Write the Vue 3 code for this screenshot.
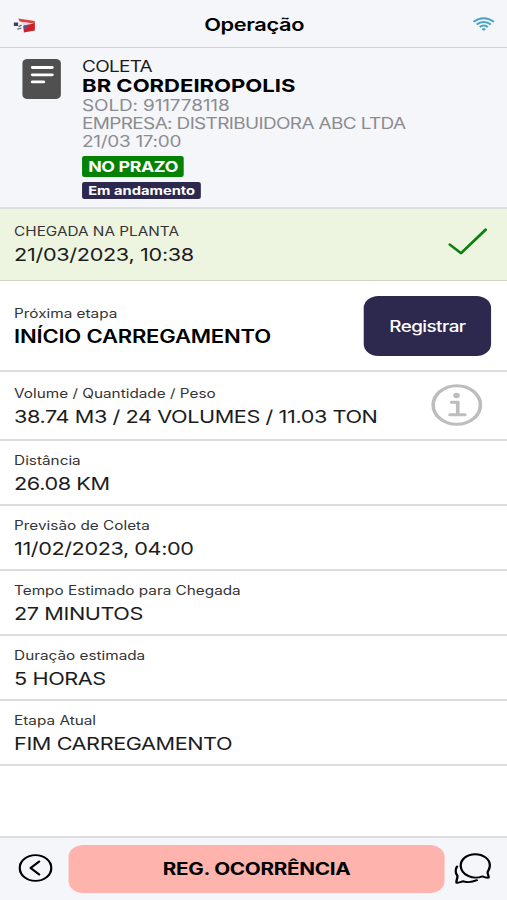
<script setup>
import { reactive } from "vue";

const coleta = reactive({
  tipo: "COLETA",
  local: "BR CORDEIROPOLIS",
  sold: "911778118",
  empresa: "DISTRIBUIDORA ABC LTDA",
  data: "21/03 17:00",
  prazo: "NO PRAZO",
  status: "Em andamento",
});

const detalhes = [
  { id: "distancia", titulo: "Distância", valor: "26.08 KM" },
  { id: "previsao", titulo: "Previsão de Coleta", valor: "11/02/2023, 04:00" },
  { id: "tempo", titulo: "Tempo Estimado para Chegada", valor: "27 MINUTOS" },
  { id: "duracao", titulo: "Duração estimada", valor: "5 HORAS" },
  { id: "etapa", titulo: "Etapa Atual", valor: "FIM CARREGAMENTO" },
];
</script>

<template>
  <div class="tela">
    <header class="topo">
      <svg class="logo" width="18" height="16" viewBox="0 0 18 16">
        <path d="M4 .6 17.3 2.9 17.5 6 12 5 5 3.6Z" fill="#e0413f" />
        <path d="M6 3.8 17 5.6 8.5 7.3Z" fill="#e9d5dc" />
        <path d="M8 8 17.5 5V12.4L8.5 14.6Z" fill="#cf2128" />
        <path d="M8.2 7.6 13 6.4 11.5 9.5 8.5 11Z" fill="#5c5793" />
        <path d="M.2 4.4h3.6v3.6H.2z" fill="#3d3f5a" />
        <path d="M4.2 8.8 6.6 7M3.2 11.2 6.4 10.2" stroke="#676b88" stroke-width="1.3" />
      </svg>
      <h1>Operação</h1>
      <svg class="wifi" width="18" height="14" viewBox="0 0 18 14" fill="none" stroke="#4aa3c7" stroke-width="1.8">
        <path d="M.6 4.9Q9-2.4 17.4 4.9" />
        <path d="M3.2 7.5Q9 2.5 14.8 7.5" />
        <path d="M5.7 10Q9 7 12.3 10" />
        <circle cx="9" cy="12.3" r="1.3" fill="#4aa3c7" stroke="none" />
      </svg>
    </header>

    <section class="coleta">
      <svg class="documento" width="32" height="41" viewBox="0 0 32 41">
        <rect x=".3" y="1" width="31.4" height="40" rx="4" fill="#505051" />
        <path d="M8.5 9.5h16M8.5 16.8h16M8.5 23.9h9" stroke="#fff" stroke-width="2.8" stroke-linecap="round" />
      </svg>
      <div class="coleta-texto">
        <p class="tipo">{{ coleta.tipo }}</p>
        <p class="local">{{ coleta.local }}</p>
        <p class="info sold">SOLD: {{ coleta.sold }}</p>
        <p class="info empresa">EMPRESA: {{ coleta.empresa }}</p>
        <p class="info">{{ coleta.data }}</p>
        <div class="prazo">{{ coleta.prazo }}</div>
        <div class="status">{{ coleta.status }}</div>
      </div>
    </section>

    <main>
      <section class="linha chegada">
        <div>
          <p class="titulo">CHEGADA NA PLANTA</p>
          <p class="valor">21/03/2023, 10:38</p>
        </div>
        <svg class="check" width="32" height="28" viewBox="0 0 32 28">
          <path d="M1.2 16.5 10.4 25.2 30.6 1.6" fill="none" stroke="#0b800b" stroke-width="2.4" stroke-linecap="round" stroke-linejoin="round" />
        </svg>
      </section>

      <section class="linha proxima">
        <div>
          <p class="titulo">Próxima etapa</p>
          <p class="valor">INÍCIO CARREGAMENTO</p>
        </div>
        <button class="registrar">Registrar</button>
      </section>

      <section class="linha volume">
        <div>
          <p class="titulo">Volume / Quantidade / Peso</p>
          <p class="valor">38.74 M3 / 24 VOLUMES / 11.03 TON</p>
        </div>
        <svg class="info-icone" width="42" height="42" viewBox="0 0 42 42" fill="none" stroke="#bdbdbd">
          <circle cx="21" cy="21" r="19.3" stroke-width="3" />
          <circle cx="20.8" cy="11.5" r="2.7" fill="#bdbdbd" stroke="none" />
          <path d="M16.8 18.2h5v12.4M15.5 30.8h12" stroke-width="3" stroke-linecap="round" stroke-linejoin="round" />
        </svg>
      </section>

      <section v-for="item in detalhes" :key="item.id" class="linha detalhe">
        <div>
          <p class="titulo">{{ item.titulo }}</p>
          <p class="valor">{{ item.valor }}</p>
        </div>
      </section>
    </main>

    <footer class="rodape">
      <svg class="voltar" width="28" height="28" viewBox="0 0 28 28" fill="none" stroke="#000" stroke-width="1.9" stroke-linecap="round" stroke-linejoin="round">
        <circle cx="14" cy="14" r="12.9" />
        <path d="M17 7.5 10 14 17 20.5" />
      </svg>
      <button class="ocorrencia">REG. OCORRÊNCIA</button>
      <svg class="chat" width="30" height="31" viewBox="0 0 30 31" fill="none" stroke="#000" stroke-width="1.9" stroke-linecap="round" stroke-linejoin="round">
        <path d="M28 24.6C26.3 25 24.6 24.3 23 23.4C15 27 5.6 22 5.2 13C5 6 10.5 1.2 17 1.2C23.5 1.2 29 6 29 12.5C29 15.2 28.2 17 27.2 19.2C26.9 21 28.3 23 28 24.6Z" />
        <path d="M2.2 13.5C.4 17 .8 20 2.5 22.8C2.8 25 1.2 28 1.8 29.7C3.5 30 5.5 28.5 7.5 28.3C11 29.7 15 29 18.4 27.2" />
      </svg>
    </footer>
  </div>
</template>

<style>
body {
  margin: 0;
  overflow: hidden;
}
</style>

<style scoped>
* {
  box-sizing: border-box;
}

.tela {
  width: 414px;
  height: 900px;
  display: flex;
  flex-direction: column;
  transform: scaleX(1.22464);
  transform-origin: 0 0;
  background: #fff;
  color: #1c1c1e;
  font-family: Inter, "Liberation Sans", sans-serif;
}

p,
h1 {
  margin: 0;
  white-space: nowrap;
}

button {
  border: 0;
  padding: 0;
  font-family: inherit;
}

.topo {
  height: 48px;
  flex: none;
  display: flex;
  align-items: center;
  justify-content: space-between;
  padding: 0 10px 0 11px;
  background: #f4f6fa;
  border-bottom: 1px solid #d0d2d6;
}

.topo h1 {
  font-size: 17.8px;
  line-height: 24px;
  letter-spacing: -0.3px;
  font-weight: 600;
  color: #000;
  padding-top: 2px;
}

.logo {
  margin-top: 5px;
}

.wifi {
  margin-top: 1px;
}

.coleta {
  height: 161px;
  flex: none;
  display: flex;
  padding: 10px 0 0 18px;
  background: #f4f6fa;
  border-bottom: 2px solid #dcdfdd;
}

.coleta-texto {
  display: flex;
  flex-direction: column;
  align-items: flex-start;
  margin-left: 17px;
}

.tipo {
  font-size: 15.5px;
  line-height: 18px;
  letter-spacing: -0.6px;
}

.local {
  font-size: 18px;
  line-height: 19px;
  font-weight: 700;
  color: #000;
}

.info {
  font-size: 15.5px;
  line-height: 18px;
  letter-spacing: -0.25px;
  color: #8c8c8f;
}

.sold {
  padding-top: 2px;
  letter-spacing: -0.12px;
}

.empresa {
  letter-spacing: -0.53px;
}

.prazo,
.status {
  color: #fff;
  font-weight: 700;
  border-radius: 2px;
  padding: 0 5px;
  white-space: nowrap;
}

.prazo {
  margin-top: 5px;
  font-size: 14.5px;
  line-height: 21px;
  letter-spacing: -0.3px;
  background: #048204;
}

.status {
  margin-top: 5px;
  font-size: 12px;
  line-height: 17px;
  background: #2c284e;
}

.linha {
  display: flex;
  align-items: flex-start;
  justify-content: space-between;
  padding: 11px 13px 0 11.5px;
  height: 65px;
  border-bottom: 2px solid #dcdcdc;
}

.titulo {
  font-size: 12.5px;
  line-height: 18px;
  color: #343436;
}

.valor {
  font-size: 17.7px;
  line-height: 27px;
  letter-spacing: -0.35px;
}

.chegada {
  height: 72px;
  padding-top: 14px;
  background: #edf5e0;
  border-bottom: 1px solid #cfd5ca;
}

.chegada .valor {
  letter-spacing: -0.27px;
}

.check {
  margin: 5px 3px 0 0;
}

.proxima {
  height: 91px;
  padding-top: 24px;
}

.proxima .valor {
  font-size: 18px;
  font-weight: 600;
  letter-spacing: -0.17px;
  color: #000;
}

.registrar {
  width: 104px;
  height: 60px;
  margin-top: -9px;
  padding-top: 1px;
  border-radius: 12px;
  background: #2c284e;
  color: #fff;
  font-size: 15.4px;
  letter-spacing: -0.45px;
  font-weight: 500;
}

.volume {
  height: 69px;
  padding-top: 13px;
}

.info-icone {
  margin: -1px 7px 0 0;
}

.rodape {
  height: 64px;
  flex: none;
  margin-top: auto;
  display: flex;
  align-items: center;
  padding: 0 13px 2px 15px;
  background: #f4f6fa;
  border-top: 2px solid #dcdddf;
}

.ocorrencia {
  width: 307px;
  height: 48px;
  margin: 1px 8px 0 13px;
  flex: none;
  border-radius: 12px;
  background: #ffb3ad;
  color: #000;
  font-size: 16.9px;
  letter-spacing: -0.25px;
  font-weight: 700;
}

.voltar,
.chat {
  flex: none;
}
</style>
